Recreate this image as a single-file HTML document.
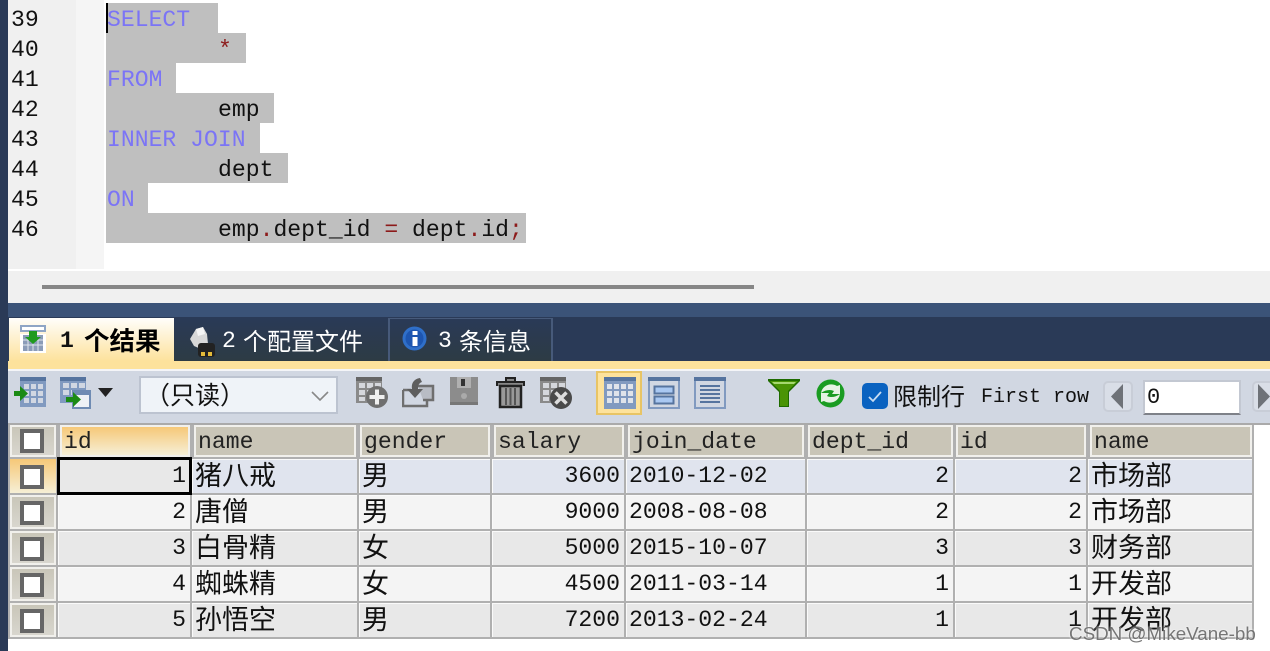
<!DOCTYPE html>
<html><head><meta charset="utf-8">
<style>
html,body{margin:0;padding:0;width:1270px;height:651px;overflow:hidden;background:#fff}
#p{position:relative;width:1270px;height:651px;overflow:hidden;font-family:"Liberation Mono","Noto Sans CJK SC",monospace;font-size:23.1px;color:#111}
#p div,#p svg{position:absolute}
.t{white-space:pre;height:30px;line-height:30px}
.sel{background:#bfbfbf;left:106px;height:30px}
.k{color:#7b74f6}
.c{font-family:"Noto Sans CJK SC",sans-serif;white-space:pre}
.h{background:#c9c5b7;top:427px;height:28px;box-shadow:0 0 0 2px #f1f0ec;line-height:30px;padding-left:2px;box-sizing:border-box;white-space:pre;color:#222}
.cell{height:34px;line-height:34px;white-space:pre;box-sizing:border-box;padding:0 3px;box-shadow:inset 1px 1px 0 #fafafa}
.r{text-align:right;padding-right:4px}
.cjk{font-family:"Noto Sans CJK SC",sans-serif;font-size:27px;line-height:30px;padding-left:3px;overflow:hidden}
.a{background:#e0e4ee}.b{background:#f4f4f4}.d{background:#e8e8e8}
.rh{left:10px;width:46px;height:32px;background:linear-gradient(#c9c6b9,#d8d6ce);border:2px solid #f1f0ec;box-sizing:border-box}
.cb{left:20px;width:24px;height:24px;background:#fff;border:4px solid #666;box-sizing:border-box}
</style></head><body><div id="p">

<div style="left:0;top:0;width:8px;height:651px;background:#2a3a57"></div>
<div style="left:8px;top:0;width:68px;height:269px;background:#f0f0f0"></div>
<div style="left:76px;top:0;width:28px;height:269px;background:#f5f5f5"></div>

<div class="sel" style="top:3px;width:112px"></div>
<div class="sel" style="top:33px;width:140px"></div>
<div class="sel" style="top:63px;width:70px"></div>
<div class="sel" style="top:93px;width:168px"></div>
<div class="sel" style="top:123px;width:154px"></div>
<div class="sel" style="top:153px;width:182px"></div>
<div class="sel" style="top:183px;width:42px"></div>
<div class="sel" style="top:213px;width:420px"></div>
<div style="left:106px;top:3px;width:2px;height:30px;background:#000"></div>

<div class="t" style="left:11px;top:5px">39</div>
<div class="t" style="left:11px;top:35px">40</div>
<div class="t" style="left:11px;top:65px">41</div>
<div class="t" style="left:11px;top:95px">42</div>
<div class="t" style="left:11px;top:125px">43</div>
<div class="t" style="left:11px;top:155px">44</div>
<div class="t" style="left:11px;top:185px">45</div>
<div class="t" style="left:11px;top:215px">46</div>

<div class="t k" style="left:107px;top:5px">SELECT</div>
<div class="t" style="left:218px;top:35px;color:#8c1a1a">*</div>
<div class="t k" style="left:107px;top:65px">FROM</div>
<div class="t" style="left:218px;top:95px">emp</div>
<div class="t k" style="left:107px;top:125px">INNER JOIN</div>
<div class="t" style="left:218px;top:155px">dept</div>
<div class="t k" style="left:107px;top:185px">ON</div>
<div class="t" style="left:218px;top:215px">emp<span style="color:#8c1a1a">.</span>dept_id <span style="color:#8c1a1a">=</span> dept<span style="color:#8c1a1a">.</span>id<span style="color:#8c1a1a">;</span></div>

<div style="left:8px;top:271px;width:1262px;height:32px;background:#f0f0f0"></div>
<div style="left:42px;top:285px;width:712px;height:4px;background:#868686"></div>

<div style="left:8px;top:303px;width:1262px;height:14px;background:#3b5378"></div>
<div style="left:8px;top:317px;width:1262px;height:44px;background:#2a3a57"></div>
<div style="left:8px;top:361px;width:1262px;height:8px;background:#fde29c"></div>
<div style="left:8px;top:369px;width:1262px;height:2px;background:#f4f5f8"></div>
<div style="left:8px;top:371px;width:1262px;height:52px;background:#d1d7e2"></div>
<div style="left:8px;top:423px;width:1262px;height:2px;background:#aaa"></div>

<div style="left:9px;top:318px;width:165px;height:43px;background:linear-gradient(#fffefb,#fde29c)"></div>
<div style="left:174px;top:318px;width:214px;height:43px;background:linear-gradient(#2a3a57,#2d3b44)"></div>
<div style="left:388px;top:318px;width:2px;height:43px;background:#475a7a"></div>
<div style="left:390px;top:318px;width:163px;height:43px;background:linear-gradient(#2a3a57,#2d3b44);border-top:1px solid #475a7a;border-right:2px solid #475a7a;box-sizing:border-box"></div>

<svg style="left:20px;top:325px" width="27" height="29" viewBox="0 0 27 29"><rect x="0" y="0" width="26" height="7" fill="#8fa5c5"/><rect x="2" y="2" width="22" height="3" fill="#fff"/><rect x="0" y="9" width="26" height="19" fill="#fff"/><rect x="3" y="10" width="20" height="16" fill="#8b9cb8"/><path d="M3 15h20M3 20h20M8 12v14M13 12v14M18 12v14" stroke="#dfe4ec" stroke-width="1"/><path d="M9 6h8v6h4l-8 7-8-7h4z" fill="#1e9a1e"/></svg>
<div class="t" style="left:60px;top:326px;font-weight:bold;color:#111">1</div>
<div class="c" style="left:84px;top:322px;height:36px;line-height:36px;font-size:25.500px;font-weight:700;color:#000">个结果</div>

<svg style="left:187px;top:326px" width="30" height="31" viewBox="0 0 30 31"><path d="M3 13 L9 3 L16 1 L20 8 L21 18 L14 23 L7 20z" fill="#d8d8d8"/><path d="M9 3L16 1 18 8 11 10z" fill="#f5f5f5"/><rect x="11" y="17" width="17" height="14" fill="#222" rx="3"/><rect x="14" y="26" width="4" height="4" fill="#e4bb3a"/><rect x="21" y="26" width="4" height="4" fill="#e4bb3a"/></svg>
<div class="t" style="left:222px;top:326px;color:#fff">2</div>
<div class="c" style="left:243px;top:322px;height:36px;line-height:36px;font-size:24px;color:#fff">个配置文件</div>

<svg style="left:402px;top:326px" width="25" height="25" viewBox="0 0 25 25"><circle cx="12.500" cy="12.500" r="12" fill="#2f6fc9"/><circle cx="12.500" cy="12.500" r="9" fill="#1d55b0"/><rect x="10.500" y="5" width="5" height="4" fill="#fff"/><rect x="10.500" y="11" width="5" height="9" fill="#fff"/></svg>
<div class="t" style="left:438px;top:326px;color:#fff">3</div>
<div class="c" style="left:459px;top:322px;height:36px;line-height:36px;font-size:24px;color:#fff">条信息</div>

<svg style="left:14px;top:377px" width="33" height="31" viewBox="0 0 33 31"><rect x="6" y="0" width="26" height="30" fill="#819ac0"/><rect x="6" y="0" width="26" height="4" fill="#56749f"/><path d="M10 7h5v5h-5zM17 7h5v5h-5zM24 7h5v5h-5zM10 14h5v5h-5zM17 14h5v5h-5zM24 14h5v5h-5zM10 21h5v5h-5zM17 21h5v5h-5zM24 21h5v5h-5z" fill="#d1d7e2"/><path d="M0 14h6v-5l8 7.500-8 7.500v-5H0z" fill="#1b8a14"/></svg>
<svg style="left:60px;top:377px" width="31" height="32" viewBox="0 0 31 32"><rect x="0" y="0" width="26" height="26" fill="#819ac0"/><rect x="0" y="0" width="26" height="4" fill="#56749f"/><path d="M3 6h6v5h-6zM11 6h6v5h-6zM19 6h6v5h-6zM3 13h6v5h-6zM11 13h6v5h-6z" fill="#d1d7e2"/><rect x="13" y="14" width="17" height="17" fill="#eef1f6" stroke="#6f8bb3" stroke-width="2"/><rect x="13" y="14" width="17" height="4" fill="#6f8bb3"/><path d="M6 20h7v-5l8 7.500-8 7.500v-5H6z" fill="#1b8a14"/></svg>
<svg style="left:98px;top:388px" width="15" height="9" viewBox="0 0 15 9"><path d="M0 0h15L7.500 9z" fill="#222"/></svg>

<div style="left:139px;top:376px;width:199px;height:38px;background:#eff3f8;border:2px solid #bcc3d0;box-sizing:border-box"></div>
<div class="c" style="left:145px;top:375px;height:38px;line-height:38px;font-size:25px;color:#111">（只读）</div>
<svg style="left:311px;top:391px" width="18" height="11" viewBox="0 0 18 11"><path d="M1 1l8 8 8-8" fill="none" stroke="#888" stroke-width="1.600"/></svg>

<svg style="left:356px;top:377px" width="33" height="32" viewBox="0 0 33 32"><rect x="0" y="0" width="26" height="26" fill="#8a8a8a"/><rect x="0" y="0" width="26" height="4" fill="#666"/><path d="M3 6h6v5h-6zM11 6h6v5h-6zM19 6h6v5h-6zM3 13h6v5h-6zM11 13h6v5h-6zM3 20h6v4h-6z" fill="#d5d7dc"/><circle cx="21" cy="20" r="11" fill="#6f6f6f"/><path d="M19 12.500h4v5.500h5.500v4H23v5.500h-4V22h-5.500v-4H19z" fill="#f0f0f0"/></svg>
<svg style="left:402px;top:377px" width="33" height="31" viewBox="0 0 33 31"><path d="M1 13h8M1 13v16h24v-8" fill="none" stroke="#6f6f6f" stroke-width="2.500"/><path d="M16 9h15v14H21" fill="#b8bcc4" stroke="#6f6f6f" stroke-width="2.500"/><path d="M18 1c-6 1-9 5-8 11H5l8 9 8-9h-5c0-4 1-6 4-7z" fill="#5e5e5e"/></svg>
<svg style="left:450px;top:377px" width="29" height="29" viewBox="0 0 29 29"><rect width="28" height="28" fill="#8c8c8c"/><rect x="7" y="0" width="14" height="11" fill="#b0b0b0"/><rect x="11" y="2" width="4" height="7" fill="#333"/><circle cx="14" cy="19" r="3" fill="#aaa"/><rect x="0" y="25" width="28" height="3" fill="#777"/></svg>
<svg style="left:496px;top:377px" width="29" height="32" viewBox="0 0 29 32"><path d="M10 4V1h9v3M1 9V5h27v4" fill="#888" stroke="#222" stroke-width="2"/><path d="M4 9h21v21H4z" fill="#999" stroke="#222" stroke-width="2.500"/><path d="M10 11v17M14.500 11v17M19 11v17" stroke="#555" stroke-width="2"/></svg>
<svg style="left:540px;top:377px" width="33" height="33" viewBox="0 0 33 33"><rect x="0" y="0" width="26" height="26" fill="#8a8a8a"/><rect x="0" y="0" width="26" height="4" fill="#666"/><path d="M3 6h6v5h-6zM11 6h6v5h-6zM19 6h6v5h-6zM3 13h6v5h-6zM11 13h6v5h-6zM3 20h6v4h-6z" fill="#d5d7dc"/><circle cx="21" cy="21" r="11" fill="#4a4a4a"/><path d="M15.500 15.500l11 11M26.500 15.500l-11 11" stroke="#ddd" stroke-width="3.500"/></svg>

<div style="left:596px;top:371px;width:46px;height:44px;background:#fde29c;border:2px solid #e8c465;box-sizing:border-box"></div>
<svg style="left:604px;top:377px" width="32" height="32" viewBox="0 0 32 32"><rect width="32" height="32" fill="#819ac0"/><rect width="32" height="4" fill="#56749f"/><path d="M3 7h5v5h-5zM10 7h5v5h-5zM17 7h5v5h-5zM24 7h5v5h-5zM3 14h5v5h-5zM10 14h5v5h-5zM17 14h5v5h-5zM24 14h5v5h-5zM3 21h5v5h-5zM10 21h5v5h-5zM17 21h5v5h-5zM24 21h5v5h-5z" fill="#dfe3ea"/></svg>
<svg style="left:648px;top:377px" width="32" height="32" viewBox="0 0 32 32"><rect x="1" y="1" width="30" height="30" fill="#d1d7e2" stroke="#819ac0" stroke-width="2"/><rect width="32" height="4" fill="#56749f"/><rect x="6.500" y="9.500" width="19" height="7" fill="#a9c8f2" stroke="#56749f" stroke-width="2"/><rect x="6.500" y="19.500" width="19" height="7" fill="#a9c8f2" stroke="#56749f" stroke-width="2"/></svg>
<svg style="left:694px;top:377px" width="32" height="32" viewBox="0 0 32 32"><rect x="1" y="1" width="30" height="30" fill="#d1d7e2" stroke="#819ac0" stroke-width="2"/><rect width="32" height="4" fill="#56749f"/><path d="M6 9h20M6 13h20M6 17h20M6 21h20M6 25h20" stroke="#56749f" stroke-width="2"/></svg>

<svg style="left:768px;top:379px" width="32" height="28" viewBox="0 0 32 28"><path d="M0 0h32v2L21 13v15H11V13L0 2z" fill="#1f6b00"/><path d="M2 2h28L20 12v15h-8V12z" fill="#4a9405"/><path d="M4 3h24l-2 2H6z" fill="#a6d870"/></svg>
<svg style="left:816px;top:379px" width="29" height="29" viewBox="0 0 29 29"><circle cx="14.500" cy="14.500" r="14" fill="#1a9c22"/><path d="M5 14c1-7 9-11 16-7l3-1v9h-8l2-3c-4-2-9-1-13 2z" fill="#e6f3e4"/><path d="M24 15c-1 7-9 11-16 7l-3 1v-9h8l-2 3c4 2 9 1 13-2z" fill="#e6f3e4"/></svg>
<div style="left:862px;top:383px;width:26px;height:26px;background:#0a62c0;border-radius:5px"></div>
<svg style="left:867px;top:390px" width="16" height="13" viewBox="0 0 16 13"><path d="M2 7l4 4 8-9" fill="none" stroke="#c8dcf2" stroke-width="1.800"/></svg>
<div class="c" style="left:893px;top:376px;height:38px;line-height:38px;font-size:24px;color:#111">限制行</div>
<div class="t" style="left:981px;top:383px;font-size:20px;color:#111">First row</div>

<div style="left:1103px;top:381px;width:30px;height:31px;background:#d9dee7;border:2px solid #c8cdd7;border-radius:5px;box-sizing:border-box"></div>
<svg style="left:1111px;top:384px" width="13" height="25" viewBox="0 0 13 25"><path d="M12 0v25L0 12.500z" fill="#6e7278"/></svg>
<div style="left:1143px;top:380px;width:98px;height:35px;background:#fff;border:2px solid #c3c8d2;border-bottom:2px solid #7e8188;box-sizing:border-box"></div>
<div class="t" style="left:1147px;top:383px;color:#111;font-size:22px">0</div>
<div style="left:1252px;top:381px;width:22px;height:31px;background:#d9dee7;border:2px solid #c8cdd7;border-radius:5px;box-sizing:border-box"></div>
<svg style="left:1258px;top:384px" width="12" height="25" viewBox="0 0 12 25"><path d="M0 0v25L12 12.500z" fill="#6e7278"/></svg>

<!-- grid -->
<div style="left:8px;top:425px;width:1246px;height:214px;background:#b0b0b0"></div>
<div class="rh" style="top:425px;height:32px"></div>
<div class="rh" style="top:459px;height:34px;background:linear-gradient(#f6c878,#f6efd6);left:10px;border:0"></div>
<div class="rh" style="top:495px;height:34px"></div>
<div class="rh" style="top:531px;height:34px"></div>
<div class="rh" style="top:567px;height:34px"></div>
<div class="rh" style="top:603px;height:34px"></div>
<div class="cb" style="top:429px"></div>
<div class="cb" style="top:465px"></div>
<div class="cb" style="top:501px"></div>
<div class="cb" style="top:537px"></div>
<div class="cb" style="top:573px"></div>
<div class="cb" style="top:609px"></div>

<div class="h" style="left:62px;width:126px;background:linear-gradient(#f6c878,#f6efd6)">id</div>
<div class="h" style="left:196px;width:158px">name</div>
<div class="h" style="left:362px;width:126px">gender</div>
<div class="h" style="left:496px;width:126px">salary</div>
<div class="h" style="left:630px;width:172px">join_date</div>
<div class="h" style="left:810px;width:141px">dept_id</div>
<div class="h" style="left:958px;width:126px">id</div>
<div class="h" style="left:1092px;width:158px">name</div>

<div class="cell r d" style="left:58px;top:459px;width:132px">1</div>
<div class="cell cjk a" style="left:192px;top:459px;width:165px">猪八戒</div>
<div class="cell cjk a" style="left:359px;top:459px;width:131px">男</div>
<div class="cell r a" style="left:492px;top:459px;width:132px">3600</div>
<div class="cell a" style="left:626px;top:459px;width:179px">2010-12-02</div>
<div class="cell r a" style="left:807px;top:459px;width:146px">2</div>
<div class="cell r a" style="left:955px;top:459px;width:131px">2</div>
<div class="cell cjk a" style="left:1088px;top:459px;width:164px">市场部</div>

<div class="cell r b" style="left:58px;top:495px;width:132px">2</div>
<div class="cell cjk b" style="left:192px;top:495px;width:165px">唐僧</div>
<div class="cell cjk b" style="left:359px;top:495px;width:131px">男</div>
<div class="cell r b" style="left:492px;top:495px;width:132px">9000</div>
<div class="cell b" style="left:626px;top:495px;width:179px">2008-08-08</div>
<div class="cell r b" style="left:807px;top:495px;width:146px">2</div>
<div class="cell r b" style="left:955px;top:495px;width:131px">2</div>
<div class="cell cjk b" style="left:1088px;top:495px;width:164px">市场部</div>

<div class="cell r d" style="left:58px;top:531px;width:132px">3</div>
<div class="cell cjk d" style="left:192px;top:531px;width:165px">白骨精</div>
<div class="cell cjk d" style="left:359px;top:531px;width:131px">女</div>
<div class="cell r d" style="left:492px;top:531px;width:132px">5000</div>
<div class="cell d" style="left:626px;top:531px;width:179px">2015-10-07</div>
<div class="cell r d" style="left:807px;top:531px;width:146px">3</div>
<div class="cell r d" style="left:955px;top:531px;width:131px">3</div>
<div class="cell cjk d" style="left:1088px;top:531px;width:164px">财务部</div>

<div class="cell r b" style="left:58px;top:567px;width:132px">4</div>
<div class="cell cjk b" style="left:192px;top:567px;width:165px">蜘蛛精</div>
<div class="cell cjk b" style="left:359px;top:567px;width:131px">女</div>
<div class="cell r b" style="left:492px;top:567px;width:132px">4500</div>
<div class="cell b" style="left:626px;top:567px;width:179px">2011-03-14</div>
<div class="cell r b" style="left:807px;top:567px;width:146px">1</div>
<div class="cell r b" style="left:955px;top:567px;width:131px">1</div>
<div class="cell cjk b" style="left:1088px;top:567px;width:164px">开发部</div>

<div class="cell r d" style="left:58px;top:603px;width:132px">5</div>
<div class="cell cjk d" style="left:192px;top:603px;width:165px">孙悟空</div>
<div class="cell cjk d" style="left:359px;top:603px;width:131px">男</div>
<div class="cell r d" style="left:492px;top:603px;width:132px">7200</div>
<div class="cell d" style="left:626px;top:603px;width:179px">2013-02-24</div>
<div class="cell r d" style="left:807px;top:603px;width:146px">1</div>
<div class="cell r d" style="left:955px;top:603px;width:131px">1</div>
<div class="cell cjk d" style="left:1088px;top:603px;width:164px">开发部</div>

<div style="left:57px;top:457px;width:135px;height:38px;border:3px solid #000;box-sizing:border-box"></div>

<div style="left:1069px;top:622px;height:24px;line-height:24px;white-space:pre;font-family:'Liberation Sans',sans-serif;font-size:18.800px;color:rgba(95,95,95,.85);text-shadow:0 0 2px #fff">CSDN @MikeVane-bb</div>
</div></body></html>
